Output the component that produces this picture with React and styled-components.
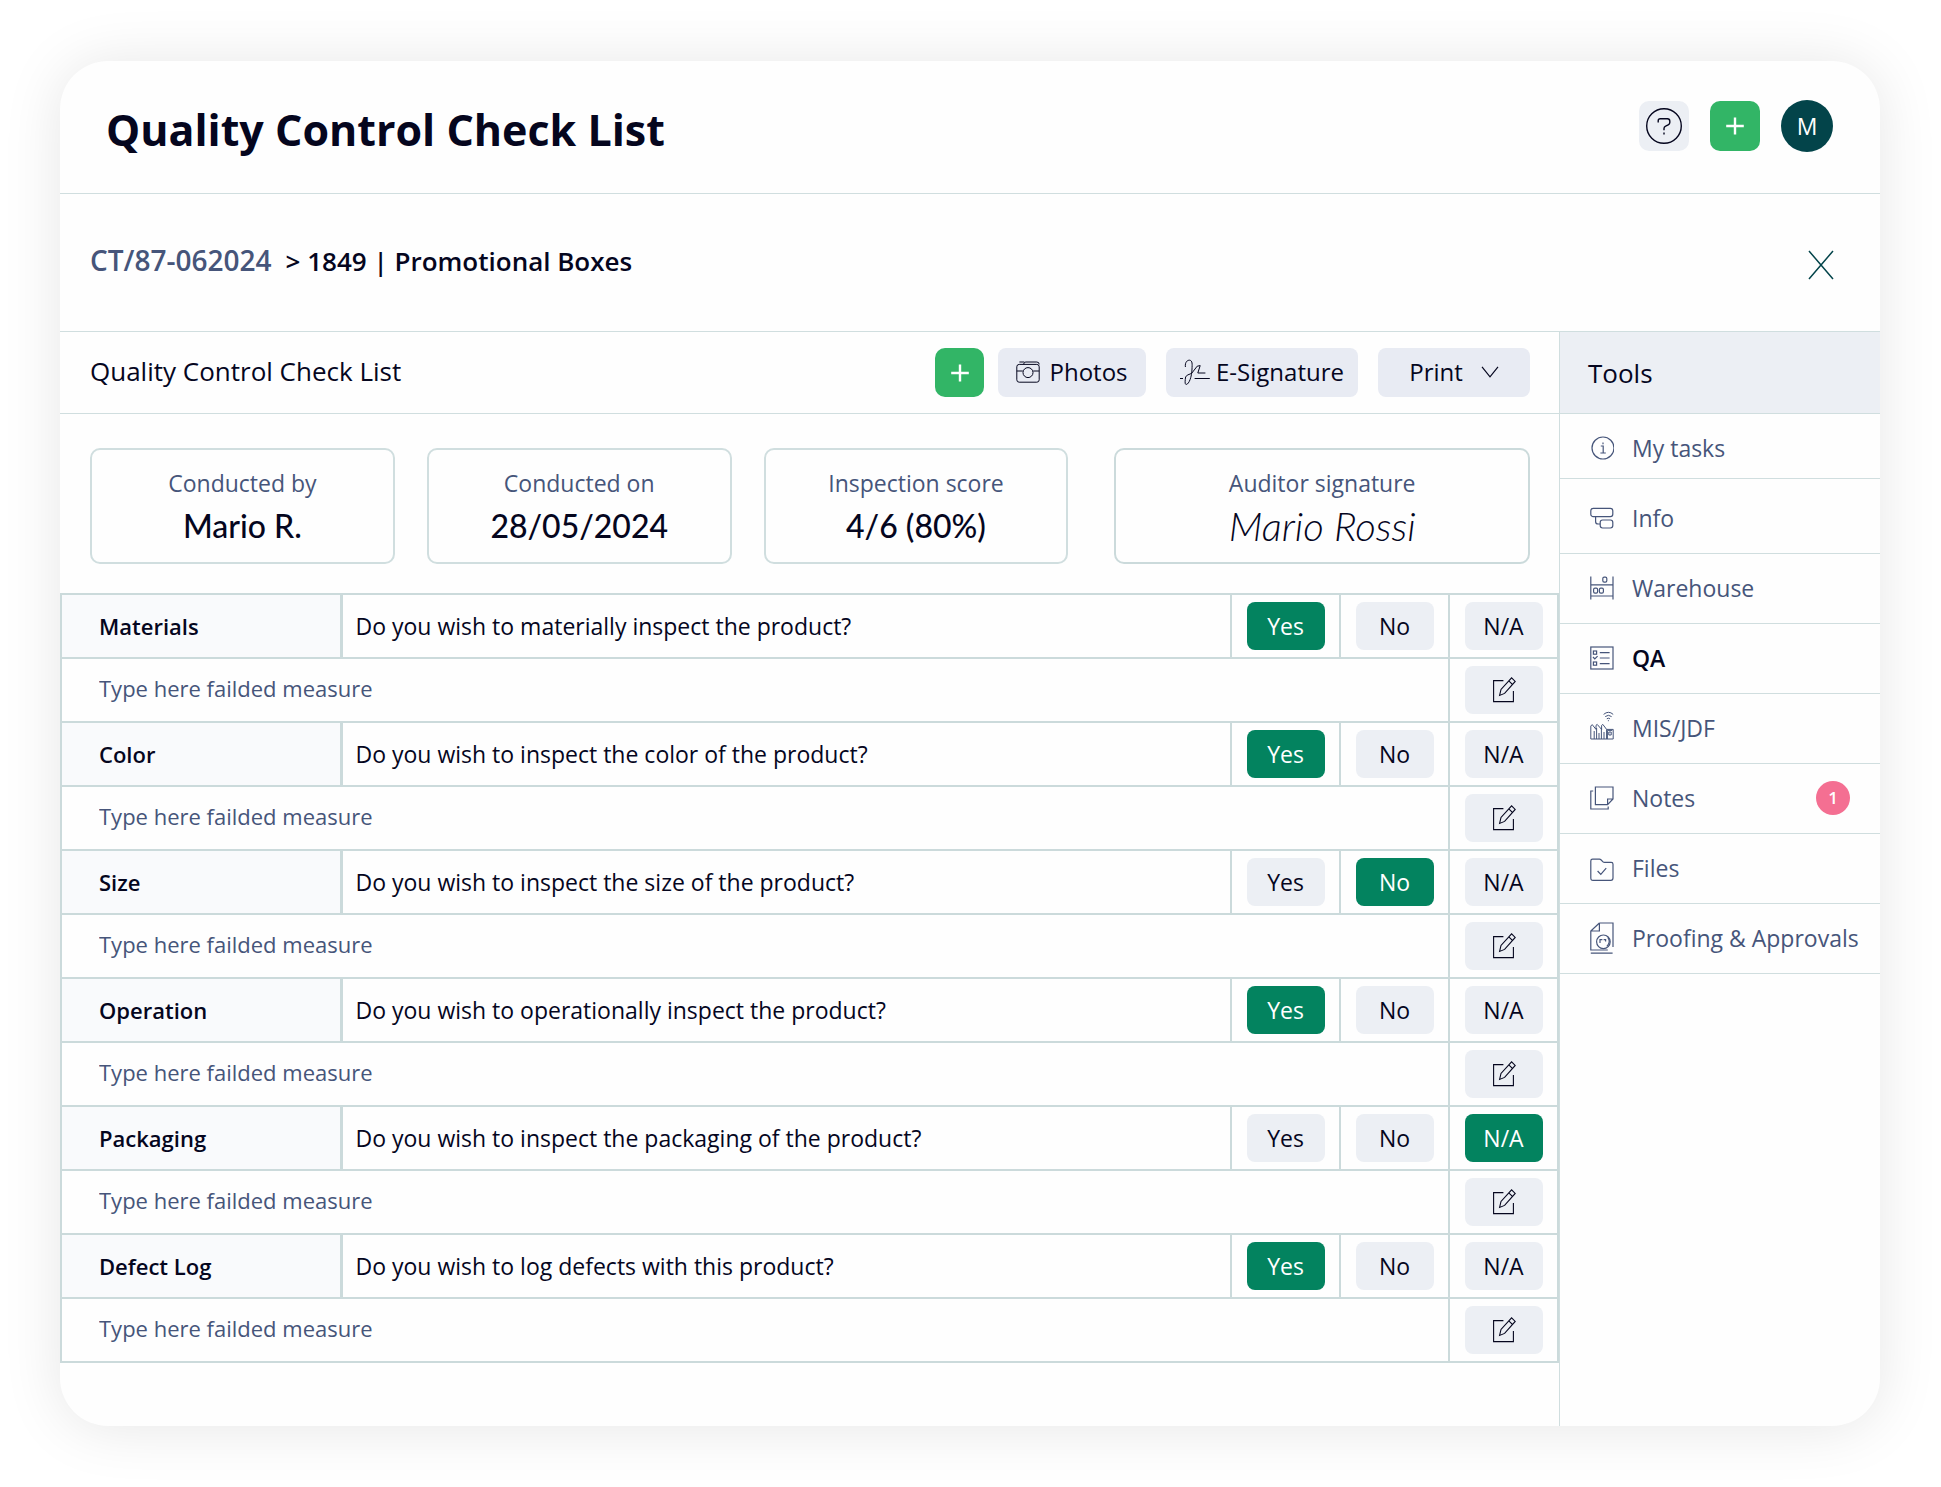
import React, { useState } from "react";
import styled, { createGlobalStyle } from "styled-components";

const color = {
  ink: "#05061e",
  slate: "#46557a",
  line: "#d0dedf",
  grid: "#cbdadb",
  soft: "#eceff4",
  tool: "#e8ebf3",
  green: "#32b566",
  deep: "#03835f",
  teal: "#03444a",
  pink: "#f46f92",
};

const GlobalStyle = createGlobalStyle`
  *, *::before, *::after { box-sizing: border-box; }
  body { margin: 0; background: #fff; }
  button, input { font: inherit; color: inherit; }
`;

const Page = styled.div`
  min-height: 100vh;
  padding: 61px 61px 61px 60px;
  display: flex;
  font-family: "Open Sans", "Noto Sans", sans-serif;
  font-size: 23px;
  line-height: 32px;
  color: ${color.ink};
`;

const Panel = styled.div`
  flex: 1;
  min-width: 0;
  display: flex;
  flex-direction: column;
  border-radius: 48px;
  overflow: hidden;
  background: #fefefe;
  box-shadow: 0 2px 60px rgba(0, 0, 0, 0.1);
`;

const Header = styled.header`
  display: flex;
  align-items: center;
  justify-content: space-between;
  height: 133px;
  padding: 0 47px 2px 46px;
  border-bottom: 1px solid ${color.line};
`;

const Title = styled.h1`
  margin: 0;
  padding-top: 8px;
  font-size: 43px;
  line-height: 56px;
  font-weight: 700;
`;

const HeaderActions = styled.div`
  display: flex;
  align-items: center;
  gap: 21px;
`;

const SquareButton = styled.button`
  display: grid;
  place-items: center;
  width: ${(p) => p.$size}px;
  height: ${(p) => p.$size}px;
  padding: 0;
  border: 0;
  border-radius: 10px;
  color: ${(p) => (p.$primary ? "#fff" : color.ink)};
  background: ${(p) => (p.$primary ? color.green : color.soft)};
`;

const Avatar = styled.button`
  width: 52px;
  height: 52px;
  padding: 0;
  border: 0;
  border-radius: 50%;
  color: #fff;
  background: ${color.teal};
`;

const Crumbs = styled.div`
  display: flex;
  align-items: center;
  justify-content: space-between;
  height: 138px;
  padding: 4px 46px 0 30px;
  border-bottom: 1px solid ${color.line};
`;

const Trail = styled.nav`
  display: flex;
  align-items: baseline;
  gap: 14px;
  padding-bottom: 8px;
  font-size: 26px;
  font-weight: 600;
`;

const TrailLink = styled.a`
  font-size: 28px;
  color: ${color.slate};
  text-decoration: none;
`;

const CloseButton = styled.button`
  display: grid;
  padding: 0;
  border: 0;
  background: none;
  color: ${color.teal};
`;

const Body = styled.div`
  flex: 1;
  display: flex;
`;

const Main = styled.main`
  flex: 1;
  min-width: 0;
`;

const Toolbar = styled.div`
  display: flex;
  align-items: center;
  justify-content: space-between;
  height: 82px;
  padding: 0 29px 0 30px;
  border-bottom: 1px solid ${color.line};
`;

const ToolbarTitle = styled.h2`
  margin: 0;
  padding-bottom: 4px;
  font-size: 26px;
  font-weight: 400;
`;

const Actions = styled.div`
  display: flex;
  gap: ${(p) => p.$gap}px;
`;

const ToolButton = styled.button`
  display: flex;
  align-items: center;
  justify-content: center;
  gap: ${(p) => p.$gap}px;
  width: ${(p) => p.$width}px;
  height: 49px;
  padding: 0 0 2px;
  border: 0;
  border-radius: 8px;
  font-size: 24px;
  white-space: nowrap;
  background: ${color.tool};
`;

const Cards = styled.div`
  display: flex;
  gap: 32px;
  padding: 34px 29px 29px 30px;
`;

const Card = styled.section`
  flex: 304 1 0;
  height: 116px;
  padding-top: 17px;
  border: 2px solid ${color.line};
  border-radius: 10px;
  text-align: center;
`;

const WideCard = styled(Card)`
  flex-grow: 416;
  margin-left: 14px;
  border-color: ${color.grid};
`;

const CardLabel = styled.div`
  color: ${color.slate};
`;

const CardValue = styled.div`
  padding-top: 7px;
  font-family: Lato, "Open Sans", sans-serif;
  font-size: 32px;
  line-height: 40px;
  font-weight: 500;
`;

const Signature = styled(CardValue)`
  font-style: italic;
  font-weight: 300;
  font-size: 40px;
`;

const Table = styled.table`
  width: 100%;
  table-layout: fixed;
  border-collapse: collapse;

  tr { height: 64px; }

  th, td {
    padding: 0;
    border: 2px solid ${color.grid};
  }
`;

const Topic = styled.th`
  text-align: left;
  font-size: 22px;
  font-weight: 600;
  background: #f9fafc;

  && {
    padding-left: 37px;
    border-right-width: 3px;
  }
`;

const Question = styled.td`
  && { padding-left: 13px; }
`;

const ChoiceCell = styled.td`
  text-align: center;
`;

const ChoiceButton = styled.button`
  display: inline-grid;
  place-items: center;
  width: 78px;
  height: 48px;
  padding: 0;
  border: 0;
  border-radius: 8px;
  vertical-align: middle;
  color: ${(p) => (p.$on ? "#fff" : color.ink)};
  background: ${(p) => (p.$on ? color.deep : color.soft)};
`;

const NoteInput = styled.input`
  display: block;
  width: 100%;
  height: 56px;
  padding: 0 37px 4px;
  border: 0;
  outline: 0;
  font-size: 22px;
  background: none;

  &::placeholder { color: ${color.slate}; opacity: 1; }
`;

const Side = styled.aside`
  width: 321px;
  flex: none;
  border-left: 1px solid ${color.line};
`;

const SideTitle = styled.h2`
  margin: 0;
  height: 82px;
  padding: 25px 28px 0;
  font-size: 26px;
  font-weight: 400;
  background: ${color.soft};
  border-bottom: 1px solid ${color.line};
`;

const SideList = styled.ul`
  margin: 0;
  padding: 0;
  list-style: none;
`;

const SideItem = styled.li`
  border-bottom: 1px solid ${color.line};
  padding: 18px 0 19px;

  &:first-child { padding-bottom: 14px; }
  &:nth-child(2) { padding-top: 23px; }
`;

const SideLink = styled.a`
  display: flex;
  align-items: center;
  gap: 18px;
  height: 32px;
  padding: 0 30px;
  white-space: nowrap;
  text-decoration: none;
  font-weight: ${(p) => (p.$active ? 600 : 400)};
  color: ${(p) => (p.$active ? color.ink : color.slate)};

  svg { flex: none; color: ${color.slate}; }
`;

const Badge = styled.span`
  display: grid;
  place-items: center;
  width: 34px;
  height: 34px;
  margin-left: auto;
  border-radius: 50%;
  font-size: 17px;
  font-weight: 600;
  color: #fff;
  background: ${color.pink};
`;

function Icon({ width = 24, height = 24, stroke = 1.2, children }) {
  return (
    <svg
      width={width}
      height={height}
      viewBox={`0 0 ${width} ${height}`}
      fill="none"
      stroke="currentColor"
      strokeWidth={stroke}
      aria-hidden="true"
    >
      {children}
    </svg>
  );
}

const HelpIcon = () => (
  <Icon width={38} height={38} stroke={1.4}>
    <circle cx="19" cy="19" r="17.3" />
    <path d="M13.2 15.4v-1.6q0-2 2-2h7.2q2.4 0 2.4 2.4v1.2q0 1.6-1.6 2.4l-2.6 1.4q-1.6.8-1.6 2.4v1.6M19 25.4v2" />
  </Icon>
);

const PlusIcon = () => (
  <Icon width={20} height={20} stroke={2.4}>
    <path d="M10 1.4v17.2M1.2 10h17.6" />
  </Icon>
);

const CloseIcon = () => (
  <Icon width={26} height={30} stroke={1.5}>
    <path d="M1 1l24 28M25 1L1 29" />
  </Icon>
);

const CameraIcon = () => (
  <Icon width={24} height={22} stroke={1}>
    <rect x=".8" y="3.4" width="22.4" height="17.8" rx="2.4" />
    <path d="M.8 10h6M17.2 10h6M7.2 3.4l2-2.4h11.6q2.4 0 2.4 2.4M3.4 1h5" />
    <circle cx="12" cy="11.6" r="5" />
  </Icon>
);

const SignIcon = () => (
  <Icon width={30} height={26} stroke={1}>
    <path d="M0 19.500h3M5.400 8C4.800 3 7.500 1 9.600 1.200c3 .4 2.600 4 2.400 8.800-.2 8-3 15-5.600 15.400-1.800.2-1.400-3-.8-7.400q.4-2 6-3.600l5.600-7.200 3-.6-2.400 7.400h7.600M14.600 19.500h15.200" />
  </Icon>
);

const ChevronIcon = () => (
  <Icon width={18} height={12} stroke={1.2}>
    <path d="M1 .8l8 10 8-10" />
  </Icon>
);

const EditIcon = () => (
  <Icon width={24} height={26} stroke={1.1}>
    <path d="M11.400 3.600H1.600v21h19.800V14" />
    <path d="M7.600 18.400l1.400-6L19.600.8l3.600 3.600L12.600 16.400zM16.800 3.800l3.600 3.600" />
  </Icon>
);

const TasksIcon = () => (
  <Icon>
    <circle cx="13" cy="12" r="11" />
    <path d="M10.800 10h2.400v7M10.400 17h5.400M13 6.600v1.600" />
  </Icon>
);

const InfoIcon = () => (
  <Icon>
    <rect x=".8" y="2.400" width="22" height="8.200" rx="2.400" />
    <rect x="10.200" y="14" width="12.600" height="8" rx="2.400" />
    <path d="M5.600 10.600v4.800q0 2.600 2.600 2.600h2" />
  </Icon>
);

const WarehouseIcon = () => (
  <Icon>
    <path d="M.8.600v23M23 .600v23M.8 8.800H23M.8 20H23" />
    <rect x="12.800" y="1.200" width="4" height="5" rx="1.400" />
    <rect x="3.600" y="12.200" width="4" height="5" rx="1.400" />
    <rect x="9.400" y="12.200" width="4" height="5" rx="1.400" />
  </Icon>
);

const QaIcon = () => (
  <Icon>
    <rect x=".8" y="1" width="22.200" height="22" />
    <rect x="3.400" y="5" width="3.200" height="3.200" />
    <rect x="3.400" y="16" width="3.200" height="3.200" />
    <path d="M3 11l1.800 2 2.800-2.800M9.800 6.600h9.800M9.800 12h9.800M9.800 17.600h9.800" />
  </Icon>
);

const FactoryIcon = () => (
  <Icon width={24} height={44} stroke={1}>
    <path d="M13.600 8.400q5-4.200 9.600 0M15.200 10.600q3.200-2.600 6.400 0M16.800 12.800q1.600-1.200 3.200 0M18.400 14.200v1" />
    <path d="M.8 33V20l1.400-1.400L6 23.400v-4L7.200 18.400l4.400 5v-4l1.200-1 3.800 5h6.600V33zM4.200 33v-8M6.600 33V22M9 33v-6M11.400 33V22M14 33v-7M16.600 33v-9.600M18.800 26h2.400v3h-2.400zM17.400 33v-8.600h4.800" />
  </Icon>
);

const NotesIcon = () => (
  <Icon>
    <path d="M5.400 1H23v12l-5.400 5.600H5.400zM17.600 18.600V13H23" />
    <path d="M3.200 5H.8v18h17.400v-2.400" />
  </Icon>
);

const FilesIcon = () => (
  <Icon width={24} height={28}>
    <path d="M.8 24V7q0-1.800 1.800-1.800h6.800q1 0 1.800.8l1.800 1.800q.6.600 1.600.6h6.600q1.800 0 1.800 1.800V24q0 2.400-2.200 2.400H3Q.8 26.400.8 24z" />
    <path d="M7.600 17l3.200 3.400 5.400-6.200" />
  </Icon>
);

const ProofIcon = () => (
  <Icon width={24} height={32}>
    <path d="M9.400 1H23v24M9.400 1L.8 9v19h17M.8 9h8.600V1M.8 31.200h21.800" />
    <circle cx="13.400" cy="19.800" r="6.800" />
    <path d="M10 21v-3.400h2.400M13.600 17.600h2v1.800M17.800 15.400q3.400 4.800-1 9" />
  </Icon>
);

const tools = [
  ["My tasks", TasksIcon],
  ["Info", InfoIcon],
  ["Warehouse", WarehouseIcon],
  ["QA", QaIcon],
  ["MIS/JDF", FactoryIcon],
  ["Notes", NotesIcon, 1],
  ["Files", FilesIcon],
  ["Proofing & Approvals", ProofIcon],
];

const checks = [
  ["Materials", "Do you wish to materially inspect the product?", "Yes"],
  ["Color", "Do you wish to inspect the color of the product?", "Yes"],
  ["Size", "Do you wish to inspect the size of the product?", "No"],
  ["Operation", "Do you wish to operationally inspect the product?", "Yes"],
  ["Packaging", "Do you wish to inspect the packaging of the product?", "N/A"],
  ["Defect Log", "Do you wish to log defects with this product?", "Yes"],
];

function CheckRows({ topic, question, initial }) {
  const [answer, setAnswer] = useState(initial);
  return (
    <>
      <tr>
        <Topic scope="row">{topic}</Topic>
        <Question>{question}</Question>
        {["Yes", "No", "N/A"].map((choice) => (
          <ChoiceCell key={choice}>
            <ChoiceButton
              type="button"
              $on={answer === choice}
              aria-pressed={answer === choice}
              onClick={() => setAnswer(choice)}
            >
              {choice}
            </ChoiceButton>
          </ChoiceCell>
        ))}
      </tr>
      <tr>
        <td colSpan={4}>
          <NoteInput placeholder="Type here failded measure" aria-label={`${topic} failed measure`} />
        </td>
        <ChoiceCell>
          <ChoiceButton type="button" aria-label={`Edit ${topic}`}>
            <EditIcon />
          </ChoiceButton>
        </ChoiceCell>
      </tr>
    </>
  );
}

const TopicCol = styled.col`
  width: 280px;
`;

const ChoiceCol = styled.col`
  width: 109px;
`;

export default function App() {
  return (
    <>
      <GlobalStyle />
      <Page>
        <Panel>
          <Header>
            <Title>Quality Control Check List</Title>
            <HeaderActions>
              <SquareButton type="button" $size={50} aria-label="Help">
                <HelpIcon />
              </SquareButton>
              <SquareButton type="button" $size={50} $primary aria-label="Add">
                <PlusIcon />
              </SquareButton>
              <Avatar type="button">M</Avatar>
            </HeaderActions>
          </Header>
          <Crumbs>
            <Trail>
              <TrailLink href="#job">CT/87-062024</TrailLink>
              <span>&gt; 1849 | Promotional Boxes</span>
            </Trail>
            <CloseButton type="button" aria-label="Close">
              <CloseIcon />
            </CloseButton>
          </Crumbs>
          <Body>
            <Main>
              <Toolbar>
                <ToolbarTitle>Quality Control Check List</ToolbarTitle>
                <Actions $gap={20}>
                  <Actions $gap={14}>
                    <SquareButton type="button" $size={49} $primary aria-label="Add item">
                      <PlusIcon />
                    </SquareButton>
                    <ToolButton type="button" $width={148} $gap={9}>
                      <CameraIcon />
                      Photos
                    </ToolButton>
                  </Actions>
                  <ToolButton type="button" $width={192} $gap={6}>
                    <SignIcon />
                    E-Signature
                  </ToolButton>
                  <ToolButton type="button" $width={152} $gap={18}>
                    Print
                    <ChevronIcon />
                  </ToolButton>
                </Actions>
              </Toolbar>
              <Cards>
                <Card>
                  <CardLabel>Conducted by</CardLabel>
                  <CardValue>Mario R.</CardValue>
                </Card>
                <Card>
                  <CardLabel>Conducted on</CardLabel>
                  <CardValue>28/05/2024</CardValue>
                </Card>
                <Card>
                  <CardLabel>Inspection score</CardLabel>
                  <CardValue>4/6 (80%)</CardValue>
                </Card>
                <WideCard>
                  <CardLabel>Auditor signature</CardLabel>
                  <Signature>Mario Rossi</Signature>
                </WideCard>
              </Cards>
              <Table>
                <colgroup>
                  <TopicCol />
                  <col />
                  <ChoiceCol />
                  <ChoiceCol />
                  <ChoiceCol />
                </colgroup>
                <tbody>
                  {checks.map(([topic, question, initial]) => (
                    <CheckRows key={topic} topic={topic} question={question} initial={initial} />
                  ))}
                </tbody>
              </Table>
            </Main>
            <Side>
              <SideTitle>Tools</SideTitle>
              <SideList>
                {tools.map(([label, Glyph, count]) => (
                  <SideItem key={label}>
                    <SideLink href="#tool" $active={label === "QA"}>
                      <Glyph />
                      {label}
                      {count && <Badge>{count}</Badge>}
                    </SideLink>
                  </SideItem>
                ))}
              </SideList>
            </Side>
          </Body>
        </Panel>
      </Page>
    </>
  );
}
